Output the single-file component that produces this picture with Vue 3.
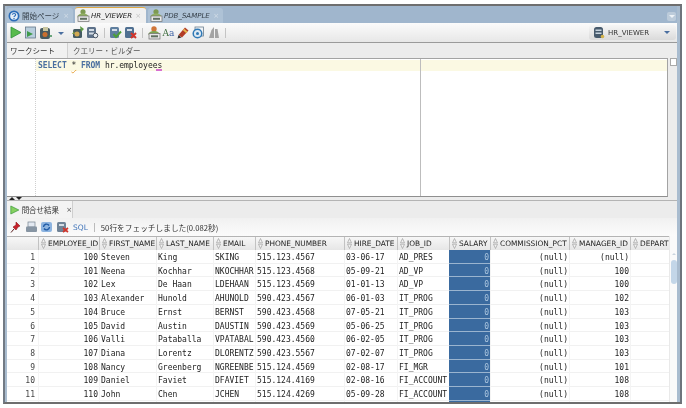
<script setup>
const cols = [
  { n: 'EMPLOYEE_ID', w: 61 }, { n: 'FIRST_NAME', w: 57 }, { n: 'LAST_NAME', w: 57 }, { n: 'EMAIL', w: 42 },
  { n: 'PHONE_NUMBER', w: 89 }, { n: 'HIRE_DATE', w: 53 }, { n: 'JOB_ID', w: 52 }, { n: 'SALARY', w: 41 },
  { n: 'COMMISSION_PCT', w: 79 }, { n: 'MANAGER_ID', w: 61 }, { n: 'DEPART', w: 39 },
]
const rows = [
  [100,'Steven','King','SKING','515.123.4567','03-06-17','AD_PRES','(null)'],
  [101,'Neena','Kochhar','NKOCHHAR','515.123.4568','05-09-21','AD_VP','100'],
  [102,'Lex','De Haan','LDEHAAN','515.123.4569','01-01-13','AD_VP','100'],
  [103,'Alexander','Hunold','AHUNOLD','590.423.4567','06-01-03','IT_PROG','102'],
  [104,'Bruce','Ernst','BERNST','590.423.4568','07-05-21','IT_PROG','103'],
  [105,'David','Austin','DAUSTIN','590.423.4569','05-06-25','IT_PROG','103'],
  [106,'Valli','Pataballa','VPATABAL','590.423.4560','06-02-05','IT_PROG','103'],
  [107,'Diana','Lorentz','DLORENTZ','590.423.5567','07-02-07','IT_PROG','103'],
  [108,'Nancy','Greenberg','NGREENBE','515.124.4569','02-08-17','FI_MGR','101'],
  [109,'Daniel','Faviet','DFAVIET','515.124.4169','02-08-16','FI_ACCOUNT','108'],
  [110,'John','Chen','JCHEN','515.124.4269','05-09-28','FI_ACCOUNT','108'],
]
</script>

<template>
  <div class="page">
    <div class="win">
      <div class="tabs">
        <div class="tab t1">
          <svg width="12" height="12" viewBox="0 0 12 12"><circle cx="6" cy="6" r="5.5" fill="#2b6cb8"/><circle cx="6" cy="6" r="3.8" fill="#e4edf7"/><path d="M4.300 4.800c.2-1.700 3.400-1.700 3.400 0 0 1.200-1.700 1.200-1.700 2.300" fill="none" stroke="#2b6cb8" stroke-width="1.100"/><circle cx="6" cy="8.500" r=".7" fill="#2b6cb8"/></svg>
          <span class="jp">開始ページ</span><span class="x">×</span>
        </div>
        <div class="tab t2 active">
          <svg width="14" height="13" viewBox="0 0 14 13"><circle cx="7" cy="2.800" r="2.600" fill="#7d9a52"/><path d="M1.500 8.500c0-3 2.500-4 5.500-4s5.500 1 5.500 4z" fill="#91b062"/><rect x="2" y="7" width="11" height="5.500" fill="#e9e9e9" stroke="#6f6f6f" stroke-width=".7"/><rect x="4" y="8.800" width="7" height="2" fill="#5f6f5f"/></svg>
          <i>HR_VIEWER</i><span class="x">×</span>
        </div>
        <div class="tab t3">
          <svg width="14" height="13" viewBox="0 0 14 13"><circle cx="7" cy="2.800" r="2.600" fill="#7d9a52"/><path d="M1.500 8.500c0-3 2.500-4 5.500-4s5.500 1 5.500 4z" fill="#91b062"/><rect x="2" y="7" width="11" height="5.500" fill="#e9e9e9" stroke="#6f6f6f" stroke-width=".7"/><rect x="4" y="8.800" width="7" height="2" fill="#5f6f5f"/></svg>
          <i>PDB_SAMPLE</i><span class="x">×</span>
        </div>
        <div class="spacer"></div>
        <div class="tabmenu"><span></span></div>
      </div>

      <div class="toolbar">
        <span class="s"><svg width="12" height="13" viewBox="0 0 12 13"><path d="M1 1l10 5.500L1 12z" fill="#58bb4c" stroke="#2f8f3a" stroke-width=".8"/></svg></span>
        <span class="s"><svg width="11" height="13" viewBox="0 0 11 13"><rect x=".5" y="1" width="10" height="11" fill="#b9cedd" stroke="#64788a" stroke-width=".8"/><path d="M2 5l6 3-6 3z" fill="#3f9a4a"/></svg></span>
        <span class="s"><svg width="13" height="14" viewBox="0 0 13 14"><rect x="1" y="2" width="10" height="11" rx="2" fill="#47595f"/><rect x="4" y="1" width="5" height="4" fill="#c9c6a0"/><circle cx="6" cy="8.500" r="2.500" fill="#c96f2e"/><path d="M10 10h3" stroke="#3c8c55" stroke-width="1.500"/></svg></span>
        <span class="caret"></span>
        <span class="s"><svg width="14" height="13" viewBox="0 0 14 13"><rect x="2" y="3" width="9" height="9" rx="1.500" fill="#445a62"/><path d="M9 0l4 3-3 3z" fill="#5f9a45"/><path d="M1 8l2-3 1 3z" fill="#7a9a45"/><circle cx="6" cy="8" r="2.500" fill="#d2a953"/></svg></span>
        <span class="s"><svg width="13" height="13" viewBox="0 0 13 13"><rect x="1" y="1" width="9" height="11" rx="1.500" fill="#5d7189"/><rect x="3" y="3" width="5" height="2" fill="#d4dde6"/><rect x="3" y="6.500" width="5" height="2" fill="#d4dde6"/><circle cx="9.500" cy="9.500" r="2.300" fill="#e7edf2" stroke="#4a5563" stroke-width="1"/></svg></span>
        <span class="sep"></span>
        <span class="s"><svg width="13" height="13" viewBox="0 0 13 13"><rect x="1" y="1" width="9" height="11" rx="1.500" fill="#5f7f9f"/><rect x="3" y="3" width="5" height="2" fill="#d4dde6"/><path d="M4.500 8l2.500 3 5-5.500" fill="none" stroke="#4d9f38" stroke-width="2"/></svg></span>
        <span class="s"><svg width="13" height="13" viewBox="0 0 13 13"><rect x="1" y="1" width="9" height="11" rx="1.500" fill="#4f6f91"/><rect x="3" y="3" width="5" height="2" fill="#d4dde6"/><path d="M7 7l5 5M12 7l-5 5" stroke="#d2342a" stroke-width="2"/></svg></span>
        <span class="sep"></span>
        <span class="s"><svg width="14" height="14" viewBox="0 0 14 14"><circle cx="7" cy="3" r="2.700" fill="#d0763a"/><path d="M1.500 9c0-3 2.500-4 5.500-4s5.500 1 5.500 4z" fill="#7da34f"/><rect x="2" y="7.500" width="11" height="5.500" fill="#e6e6e6" stroke="#6f6f6f" stroke-width=".7"/><rect x="4" y="9.300" width="7" height="2" fill="#5f6f5f"/></svg></span>
        <span class="s aa">A<b>a</b></span>
        <span class="s"><svg width="13" height="13" viewBox="0 0 13 13"><path d="M1.500 9l6.500-7.500 3.500 3L5 11.500z" fill="#b23c26"/><path d="M6.500 3.500l3.500 3" stroke="#e8b84e" stroke-width="2"/><path d="M.5 12.500L1.500 9 4.500 11.500z" fill="#2f2f2f"/></svg></span>
        <span class="s"><svg width="13" height="13" viewBox="0 0 13 13"><rect x="3" y="1" width="8.500" height="9" fill="#f0f3f6" stroke="#6d7f90" stroke-width=".8"/><circle cx="5.500" cy="7.500" r="4.300" fill="#dce8f2" stroke="#2f78b5" stroke-width="1.500"/><circle cx="5.500" cy="7.500" r="1.500" fill="#2f78b5"/></svg></span>
        <span class="s"><svg width="12" height="13" viewBox="0 0 12 13"><path d="M1 12l2.500-8L6 1v11zM7 3h2.500l1.500 9H7z" fill="#a3a3a3"/></svg></span>
        <span class="sep"></span>
        <div class="spacer"></div>
        <div class="conn">
          <svg width="12" height="13" viewBox="0 0 12 13"><rect x="1" y="1" width="9" height="11" rx="2.500" fill="#475a6c"/><rect x="2.500" y="3.500" width="6" height="1.500" fill="#c7d3dd"/><rect x="2.500" y="6.500" width="6" height="1.500" fill="#c7d3dd"/><circle cx="9.500" cy="10.500" r="1.800" fill="#d3b24a"/></svg>
          <span>HR_VIEWER</span><em></em>
        </div>
      </div>

      <div class="subtabs">
        <div class="sub on jp">ワークシート</div>
        <div class="sub jp">クエリー・ビルダー</div>
      </div>

      <div class="editor-wrap">
        <div class="editor">
          <div class="gutter"></div>
          <div class="code">
            <div class="line"><b>SELECT</b> <span class="star">*</span> <b>FROM</b> hr.<span class="emp">employees</span></div>
            <div class="margin"></div>
          </div>
        </div>
        <div class="mark"></div>
      </div>

      <div class="split"><i class="up"></i><i class="dn"></i></div>

      <div class="restabs">
        <div class="restab">
          <svg width="12" height="12" viewBox="0 0 12 12"><path d="M1 1l10 5-10 5z" fill="#86d060" stroke="#3c9a3c" stroke-width=".9"/></svg>
          <span class="jp">問合せ結果</span><span class="x">×</span>
        </div>
      </div>

      <div class="restool">
        <span class="s"><svg width="11" height="12" viewBox="0 0 11 12"><path d="M6 1l4 4-2 1-2 3-3-3 3-2z" fill="#c7202a" stroke="#8c1a1a" stroke-width=".6"/><path d="M4 8l-3 3.500" stroke="#5a2020" stroke-width="1"/></svg></span>
        <span class="s"><svg width="13" height="12" viewBox="0 0 13 12"><rect x="3" y="1" width="7" height="5" fill="#e3e9f1" stroke="#76838f" stroke-width=".7"/><rect x="1" y="5.500" width="11" height="5.500" rx="1" fill="#8795a3"/></svg></span>
        <span class="s"><svg width="13" height="12" viewBox="0 0 13 12"><rect x="1" y="1" width="11" height="10" rx="2" fill="#8db4e0"/><path d="M3.500 6a3 3 0 0 1 5.500-1.500M9.500 6A3 3 0 0 1 4 7.500" fill="none" stroke="#1f5aa5" stroke-width="1.400"/></svg></span>
        <span class="s"><svg width="13" height="12" viewBox="0 0 13 12"><rect x="1" y="1" width="9" height="10" rx="1.500" fill="#6f8397"/><rect x="3" y="3" width="5" height="2" fill="#d4dde5"/><path d="M7 7l5 4M12 7l-5 4" stroke="#d2342a" stroke-width="1.700"/></svg></span>
        <span class="sql">SQL</span>
        <span class="bar"></span>
        <span class="msg jp">50行をフェッチしました(0.082秒)</span>
      </div>

      <div class="grid-wrap">
        <div class="grid">
          <div class="head">
            <div class="corner"></div>
            <div v-for="c in cols" :key="c.n" class="hc" :style="{ width: c.w + 'px' }">
              <svg width="5" height="11" viewBox="0 0 5 11"><path d="M2.500 .5L4.500 4.800H.5zM2.500 10.500L.5 6.200h4z" fill="#f2f2f2" stroke="#a0a0a0" stroke-width=".7"/></svg>
              <span>{{ c.n }}</span>
            </div>
          </div>
          <div v-for="(r, i) in rows" :key="r[0]" class="row">
            <div class="rh">{{ i + 1 }}</div>
            <div class="td num" :style="{ width: cols[0].w + 'px' }">{{ r[0] }}</div>
            <div class="td" :style="{ width: cols[1].w + 'px' }">{{ r[1] }}</div>
            <div class="td" :style="{ width: cols[2].w + 'px' }">{{ r[2] }}</div>
            <div class="td" :style="{ width: cols[3].w + 'px' }">{{ r[3] }}</div>
            <div class="td" :style="{ width: cols[4].w + 'px' }">{{ r[4] }}</div>
            <div class="td" :style="{ width: cols[5].w + 'px' }">{{ r[5] }}</div>
            <div class="td" :style="{ width: cols[6].w + 'px' }">{{ r[6] }}</div>
            <div class="td num sel" :style="{ width: cols[7].w + 'px' }">0</div>
            <div class="td num" :style="{ width: cols[8].w + 'px' }">(null)</div>
            <div class="td num" :style="{ width: cols[9].w + 'px' }">{{ r[7] }}</div>
            <div class="td" :style="{ width: cols[10].w + 'px' }"></div>
          </div>
          <div class="row tail">
            <div class="rh"></div>
            <div v-for="(c, i) in cols" :key="c.n" class="td" :class="{ sel: i === 7 }" :style="{ width: c.w + 'px' }"></div>
          </div>
        </div>
        <div class="sb"><span class="arr"></span><span class="thumb"></span></div>
      </div>
    </div>
  </div>
</template>

<style>
html, body { margin: 0; background: #fff; }
</style>

<style scoped>
.page { width: 686px; height: 408px; box-sizing: border-box; padding: 4px 4px 4px 3px; background: #fff; overflow: hidden; font-family: "DejaVu Sans", sans-serif; }
.win { height: 100%; box-sizing: border-box; display: flex; flex-direction: column; background: #a9bccf; border-top: 2px solid #6e6e6e; border-left: 2px solid #727a84; border-right: 2px solid #6e747c; border-bottom: 2px solid #6e6e6e; padding: 0 3px 0 2px; filter: blur(.4px); overflow: hidden; }
.jp { font-family: "Noto Sans CJK JP", "Noto Sans", sans-serif; }
.spacer { flex: 1; }
.s { width: 15px; height: 15px; flex: none; display: flex; align-items: center; justify-content: center; }
.tabs { height: 17px; flex: none; display: flex; align-items: flex-end; background: #a0b6cd; gap: 2px; }
.tab { height: 15px; box-sizing: border-box; display: flex; align-items: center; gap: 1px; font-size: 7.500px; color: #36404a; background: #aec2d6; border-radius: 3px 3px 0 0; }
.tab i { font-size: 7px; font-weight: 400; }
.t1 { width: 66px; padding: 0 4px 0 1px; gap: 2px; }
.t2 { width: 71px; padding: 0 5px 0 1px; }
.t3 { width: 75px; padding: 0 4px 0 1px; }
.tab .x { margin-left: auto; color: #d3dde7; font-size: 7px; }
.tab.active { background: #f0f0f0; color: #222; height: 16px; border-top: 1px solid #dfa945; }
.tab.active .x { color: #c4c4c4; }
.tabmenu { width: 9px; height: 9px; margin: 0 1px 2px 0; background: #bccbda; border-radius: 2px; position: relative; }
.tabmenu span { position: absolute; left: 1.500px; top: 3px; border: 3px solid transparent; border-top-color: #eef3f7; border-bottom: 0; }
.toolbar { height: 20px; flex: none; box-sizing: border-box; display: flex; align-items: center; padding-left: 1px; background: linear-gradient(#fbfbfb, #e7e7e7); border-bottom: 1px solid #9a9a9a; }
.caret { width: 0; height: 0; border: 3px solid transparent; border-top-color: #4a6fa0; border-bottom: 0; margin: 1px 6px 0 5px; flex: none; }
.sep { width: 1px; height: 10px; background: #c4c4c4; margin: 0 3px 0 4px; flex: none; }
.aa { font: 9px "DejaVu Serif", serif; color: #3d6b3d; }
.aa b { color: #3f63a5; font-weight: 400; }
.conn { width: 87px; height: 15px; margin-right: 1px; display: flex; align-items: center; gap: 3px; padding: 0 6px 0 4px; box-sizing: border-box; background: linear-gradient(#f6f6f6, #dadada); border-radius: 3px; font-size: 7px; color: #333; }
.conn em { margin-left: auto; border: 3px solid transparent; border-top-color: #4a6fa0; border-bottom: 0; }
.subtabs { height: 15px; flex: none; display: flex; background: #ececec; font-size: 7.500px; color: #444; }
.sub { line-height: 16px; white-space: nowrap; }
.sub.on { width: 61px; box-sizing: border-box; padding-left: 3px; border-right: 1px solid #d0d0d0; color: #333; background: #f1f1f1; }
.sub:not(.on) { padding-left: 5px; color: #555; }
.editor-wrap { height: 139px; flex: none; display: flex; background: #ececec; }
.editor { flex: none; width: 661px; box-sizing: border-box; display: flex; background: #fff; border-top: 1px solid #a3a3a3; border-right: 1px solid #a3a3a3; border-bottom: 1px solid #8f8f8f; }
.gutter { width: 28px; flex: none; background: #fff; border-right: 1px dotted #cfcfcf; }
.code { flex: 1; position: relative; }
.line { height: 11px; margin-top: 1px; background: #fbf9e3; font: 8px/11px "DejaVu Sans Mono", monospace; color: #222; padding-left: 2px; white-space: pre; letter-spacing: -.04px; }
.line b { font-weight: 700; color: #4a6f9f; }
.star { text-decoration: underline wavy #e8a33d 1px; }
.emp { position: relative; }
.emp::after { content: ""; position: absolute; right: 0; bottom: -1px; width: 6px; height: 2px; background: #d86ed0; }
.margin { position: absolute; left: 384px; top: 0; bottom: 0; width: 1px; background: #bdbdbd; }
.mark { width: 5px; height: 6px; border: 1px solid #a9a9a9; background: #fff; margin: 0 0 0 2px; flex: none; }
.split { height: 3px; flex: none; display: flex; padding-left: 2px; gap: 1px; background: #ececec; }
.up { width: 0; height: 0; border: 3px solid transparent; border-bottom-color: #222; border-top: 0; }
.dn { width: 0; height: 0; border: 3px solid transparent; border-top-color: #222; border-bottom: 0; }
.restabs { height: 18px; flex: none; box-sizing: border-box; display: flex; align-items: flex-end; background: #ececec; border-top: 1px solid #b4b4b4; }
.restab { width: 66px; height: 17px; box-sizing: border-box; display: flex; align-items: center; gap: 2px; padding-left: 3px; background: #f3f3f3; border-right: 1px solid #cfcfcf; font-size: 7.500px; color: #333; white-space: nowrap; }
.restab .x { margin-left: 5px; color: #555; font-size: 7px; }
.restool { height: 18px; flex: none; display: flex; align-items: center; padding-left: 1px; background: linear-gradient(#f1f1f1, #fbfbfb); font-size: 8px; color: #333; }
.restool .s { width: 15.500px; }
.sql { color: #3f73b8; margin-left: 3px; font-size: 7.500px; }
.bar { width: 1px; height: 9px; background: #bbb; margin: 0 6px 0 6px; flex: none; }
.msg { font-size: 7.700px; white-space: nowrap; }
.grid-wrap { flex: 1; min-height: 0; display: flex; background: #fff; overflow: hidden; }
.grid { width: 662px; flex: none; overflow: hidden; }
.head { display: flex; height: 14px; box-sizing: border-box; background: linear-gradient(#f7f7f7, #e6e6e6); border-top: 1px solid #b4b4b4; }
.corner { width: 31px; flex: none; }
.hc { flex: none; box-sizing: border-box; display: flex; align-items: center; gap: 2px; padding-left: 2px; border-left: 1px solid #c2c2c2; font-size: 7.400px; color: #222; white-space: nowrap; overflow: hidden; }
.row { display: flex; height: 13.730px; font: 8px/15px "DejaVu Sans Mono", monospace; color: #222; box-shadow: inset 0 -1px 0 #f1f1f1; }
.rh { width: 31px; flex: none; box-sizing: border-box; padding-right: 3px; text-align: right; white-space: nowrap; color: #444; }
.td { flex: none; box-sizing: border-box; padding: 0 1px; white-space: nowrap; overflow: hidden; border-left: 1px solid #f4f4f4; }
.num { text-align: right; }
.sel { background: #3a6a9f; color: #a9c4de; border-left: 0; box-shadow: inset 0 -1px 0 #9ab4cf; }
.sb { flex: 1; background: #fafafa; border-left: 1px solid #e9e9e9; position: relative; }
.arr { position: absolute; top: 17px; left: 2px; border: 2.500px solid transparent; border-top: 0; border-bottom-color: #c9d4de; }
.thumb { position: absolute; top: 24px; left: 1px; width: 6px; height: 24px; border-radius: 3px; background: #c3d6e8; }
</style>
